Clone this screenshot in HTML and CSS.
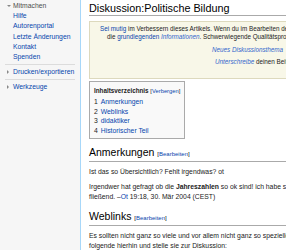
FILE: index.html
```html
<!DOCTYPE html>
<html lang="de">
<head>
  <meta charset="UTF-8" />
  <meta name="viewport" content="width=device-width, initial-scale=1.0"/>
  <title>Diskussion:Politische Bildung</title>
  <link rel="stylesheet" href="styles.css">
</head>
<body>
  <div class="page">
    <div class="sidebar">
      <div class="portal">
        <div class="portal-head open">Mitmachen</div>
        <ul class="portal-body">
          <li><a href="#">Hilfe</a></li>
          <li><a href="#">Autorenportal</a></li>
          <li><a href="#">Letzte Änderungen</a></li>
          <li><a href="#">Kontakt</a></li>
          <li><a href="#">Spenden</a></li>
        </ul>
      </div>
      <div class="portal">
        <div class="portal-head"><a href="#">Drucken/exportieren</a></div>
      </div>
      <div class="portal">
        <div class="portal-head"><a href="#">Werkzeuge</a></div>
      </div>
    </div>

    <div class="content">
      <h1 class="first-heading">Diskussion:Politische Bildung</h1>

      <div class="notice">
        <div class="notice-line l1"><a href="#">Sei mutig</a> im Verbessern dieses Artikels. Wenn du im Bearbeiten der Wikipedia unerfahren bist</div>
        <div class="notice-line l2">die <a href="#">grundlegenden <i>Informationen</i></a>. Schwerwiegende Qualitätsprobleme</div>
        <div class="notice-line l3"><a href="#"><i>Neues Diskussionsthema</i></a></div>
        <div class="notice-line l4"><a href="#"><i>Unterschreibe</i></a> deinen Beitrag</div>
      </div>

      <div class="toc">
        <div class="toc-title"><b>Inhaltsverzeichnis</b> <span class="toc-toggle">[<a href="#">Verbergen</a>]</span></div>
        <ul>
          <li><span class="num">1</span><a href="#">Anmerkungen</a></li>
          <li><span class="num">2</span><a href="#">Weblinks</a></li>
          <li><span class="num">3</span><a href="#">didaktiker</a></li>
          <li><span class="num">4</span><a href="#">Historischer Teil</a></li>
        </ul>
      </div>

      <h2>Anmerkungen <span class="edit">[<a href="#">Bearbeiten</a>]</span></h2>
      <p>Ist das so Übersichtlich? Fehlt irgendwas? ot</p>
      <p>Irgendwer hat gefragt ob die <b>Jahreszahlen</b> so ok sind! ich habe sie so gelassen<br>
      fließend. –<a href="#">Ot</a> 19:18, 30. Mär 2004 (CEST)</p>

      <h2>Weblinks <span class="edit">[<a href="#">Bearbeiten</a>]</span></h2>
      <p>Es sollten nicht ganz so viele und vor allem nicht ganz so spezielle Links sein<br>
      folgende hierhin und stelle sie zur Diskussion:</p>
    </div>
  </div>
</body>
</html>
```

FILE: styles.css
```css
body {
  margin: 0;
  font-family: 'Liberation Sans', Arial, sans-serif;
  color: #222;
  background-color: #f6f6f6;
}
a {
  color: #0645ad;
  text-decoration: none;
}
.page {
  display: flex;
  width: 286px;
  height: 250px;
  overflow: hidden;
}
.sidebar {
  width: 80px;
  flex-shrink: 0;
  padding-top: 1px;
}
.portal {
  margin: 0 5px;
}
.portal + .portal {
  border-top: 1px solid #dcdcdc;
  margin-top: 2px;
  padding-top: 2px;
}
.portal-head {
  position: relative;
  padding-left: 8px;
  font-size: 6.8px;
  line-height: 10px;
  color: #4d4d4d;
}
.portal-head::before {
  content: '';
  position: absolute;
  left: 2px;
  top: 3px;
  border-left: 2px solid #888;
  border-top: 2px solid transparent;
  border-bottom: 2px solid transparent;
}
.portal-head.open::before {
  top: 4px;
  border-top: 2px solid #888;
  border-left: 2px solid transparent;
  border-right: 2px solid transparent;
  border-bottom: none;
}
.portal-body {
  list-style: none;
  margin: 0;
  padding: 0 0 0 8px;
  font-size: 6.8px;
  line-height: 10.3px;
}
.content {
  flex: 1;
  min-width: 0;
  background-color: #fff;
  border-left: 1px solid #a7d7f9;
  padding: 0 0 0 8px;
  white-space: nowrap;
  overflow: hidden;
  font-size: 6.8px;
  line-height: 10.5px;
}
.first-heading {
  margin: 0 0 5px;
  padding-top: 2px;
  font-size: 10.8px;
  line-height: 13px;
  font-weight: normal;
  color: #000;
  border-bottom: 1px solid #aaa;
}
.notice {
  width: 320px;
  height: 58px;
  background-color: #f8f7e8;
  border: 1px solid #ddd9bd;
  font-size: 6.3px;
  line-height: 8px;
  padding-top: 3px;
  box-sizing: border-box;
}
.notice-line.l1 { padding-left: 10px; }
.notice-line.l2 { padding-left: 17px; }
.notice-line.l3 { padding-left: 122px; margin-top: 5px; }
.notice-line.l4 { padding-left: 125px; margin-top: 4px; }
.notice i { color: #3366cc; }
.toc {
  display: inline-block;
  margin-top: 2px;
  padding: 3px 4px 3px;
  background-color: #f9f9f9;
  border: 1px solid #aaa;
}
.toc-title {
  font-size: 6.3px;
  line-height: 12px;
}
.toc-toggle {
  font-size: 5.8px;
}
.toc ul {
  list-style: none;
  margin: 0;
  padding: 0;
  font-size: 6.8px;
  line-height: 9.5px;
}
.num {
  color: #222;
  padding-right: 3px;
}
h2 {
  margin: 7px 0 5px;
  font-size: 10.5px;
  line-height: 13px;
  font-weight: normal;
  color: #000;
  border-bottom: 1px solid #aaa;
}
.edit {
  font-size: 6px;
}
p {
  margin: 0 0 4px;
}
```
